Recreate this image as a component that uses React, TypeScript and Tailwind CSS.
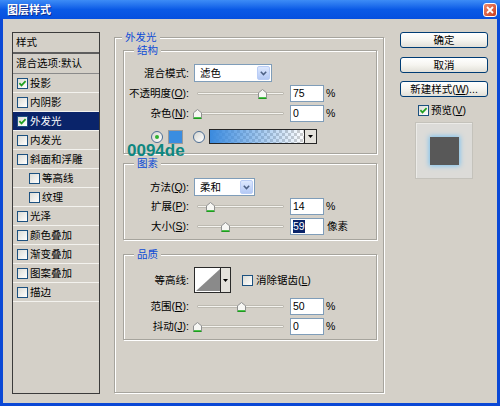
import React from "react";

const FONT = "font-['Liberation_Sans','Noto_Sans_CJK_SC',sans-serif]";

type Item = { t: string; on?: boolean; sel?: boolean; sub?: boolean };

const items: Item[] = [
  { t: "投影", on: true },
  { t: "内阴影" },
  { t: "外发光", on: true, sel: true },
  { t: "内发光" },
  { t: "斜面和浮雕" },
  { t: "等高线", sub: true },
  { t: "纹理", sub: true },
  { t: "光泽" },
  { t: "颜色叠加" },
  { t: "渐变叠加" },
  { t: "图案叠加" },
  { t: "描边" },
];

function Check({ on = false }: { on?: boolean }) {
  return (
    <span className="flex h-[11px] w-[11px] shrink-0 items-center justify-center border border-[#1c5180] bg-linear-to-br from-[#dcdcd6] to-white">
      {on && (
        <svg width="9" height="9" viewBox="0 0 9 9">
          <path d="M1.4 4.2 L3.5 6.4 L7.6 2.1" fill="none" stroke="#21a121" strokeWidth="1.7" />
        </svg>
      )}
    </span>
  );
}

function Radio({ on = false }: { on?: boolean }) {
  return (
    <span className="flex h-[12px] w-[12px] shrink-0 items-center justify-center rounded-full border border-[#4c6d93] bg-linear-to-br from-[#d6d6d0] to-white">
      {on && <span className="h-[4px] w-[4px] rounded-full bg-[#2fb12f]" />}
    </span>
  );
}

function Slider({ at }: { at: number }) {
  return (
    <div className="relative ml-[4px] h-[17px] w-[92px] shrink-0">
      <div className="absolute left-[4px] right-[1px] top-[7px] h-[3px] rounded-[1px] border border-[#bdbab1] bg-[#f4f3ef]" />
      <svg width="9" height="10" viewBox="0 0 9 10" className="absolute top-[4px]" style={{ left: at }}>
        <path d="M0.5 9.5V3.8L4.5 0.5L8.5 3.8V9.5Z" fill="#f7f7f4" stroke="#8f9090" />
        <path d="M1 8.5H8" stroke="#4cc44c" />
        <path d="M0.5 9.5H8.5" stroke="#1f9a1f" />
      </svg>
    </div>
  );
}

function NumBox({ value, picked = false }: { value: string; picked?: boolean }) {
  return (
    <div className="ml-[5px] flex h-[17px] w-[34px] shrink-0 items-center border border-[#7f9db9] bg-white pl-[2px] text-[10.5px] leading-none">
      <span className={picked ? "bg-[#0a246a] py-[1px] text-white" : ""}>{value}</span>
    </div>
  );
}

function Combo({ value, wide = false }: { value: string; wide?: boolean }) {
  return (
    <div className={`ml-[5px] flex h-[18px] shrink-0 items-center border border-[#7f9db9] bg-white ${wide ? "w-[78px]" : "w-[61px]"}`}>
      <span className="flex-1 pl-[5px] text-[10.5px] leading-none">{value}</span>
      <span className="mr-[1px] flex h-[14px] w-[13px] items-center justify-center rounded-[2px] border border-[#bacdf6] bg-linear-to-b from-[#dde8fe] to-[#b4c9f5]">
        <svg width="7" height="5" viewBox="0 0 7 5">
          <path d="M0.8 0.8L3.5 3.6L6.2 0.8" fill="none" stroke="#4d6185" strokeWidth="1.5" />
        </svg>
      </span>
    </div>
  );
}

function Row({ label, className = "", children }: { label: React.ReactNode; className?: string; children: React.ReactNode }) {
  return (
    <div className={`flex items-center ${className}`}>
      <span className="w-[65px] shrink-0 whitespace-nowrap text-right text-[10.5px] leading-none">{label}</span>
      {children}
    </div>
  );
}

function Unit({ children, className = "ml-[2px]" }: { children: React.ReactNode; className?: string }) {
  return <span className={`text-[10.5px] leading-none ${className}`}>{children}</span>;
}

function Group({ title, className = "", children }: { title: string; className?: string; children: React.ReactNode }) {
  return (
    <fieldset className={`border border-[#a6a49d] shadow-[inset_1px_1px_0_#fff,1px_1px_0_#fff] ${className}`}>
      <legend className="ml-[10px] bg-[#d4d0c8] px-[3px] text-[10.5px] leading-[14px] text-[#0c4bd6]">{title}</legend>
      {children}
    </fieldset>
  );
}

function XpButton({ children, className = "" }: { children: React.ReactNode; className?: string }) {
  return (
    <button className={`flex h-[16px] w-[88px] items-center justify-center rounded-[3px] border border-[#003c74] bg-linear-to-b from-white via-[#f6f5f0] to-[#e2e0d8] text-[10.5px] leading-none ${className}`}>
      {children}
    </button>
  );
}

export default function App() {
  return (
    <div className={`flex h-[406px] w-[500px] flex-col bg-[#0a48d6] text-black ${FONT}`}>
      {/* title bar */}
      <div className="flex h-[19px] shrink-0 items-center bg-linear-to-b from-[#3d8cf6] via-[#0a5ae6] to-[#0650df] pl-[7px]">
        <span className="mt-[2px] text-[11px] font-bold leading-none text-white [text-shadow:1px_1px_0_#0c2a8c]">图层样式</span>
        <span className="ml-auto mr-[3px] mt-[1px] flex h-[14px] w-[14px] items-center justify-center rounded-[3px] border border-white bg-linear-to-br from-[#ef8a6c] to-[#c8391c]">
          <svg width="8" height="8" viewBox="0 0 8 8">
            <path d="M1 1L7 7M7 1L1 7" stroke="#fff" strokeWidth="1.8" />
          </svg>
        </span>
      </div>

      {/* body */}
      <div className="mx-[3px] mb-[3px] flex flex-1 items-start bg-[#d4d0c8] pl-[9px] pt-[11px]">
        {/* style list */}
        <div className="mt-[2px] flex h-[362px] w-[88px] shrink-0 flex-col border border-[#3b3b3b] text-[10.5px] leading-none">
          <div className="flex h-[21px] items-center border-b-2 border-[#5e5e5e] pl-[3px]">样式</div>
          <div className="flex h-[20px] items-center border-b border-[#8a8a8a] pl-[3px]">混合选项:默认</div>
          {items.map((it) => (
            <div
              key={it.t}
              className={`flex h-[19px] items-center gap-[2px] border-b border-[#f3f2ee] ${it.sub ? "pl-[16px]" : "pl-[4px]"} ${it.sel ? "bg-[#0a246a] text-white" : ""}`}
            >
              <Check on={it.on} />
              <span>{it.t}</span>
            </div>
          ))}
        </div>

        {/* outer glow settings */}
        <div className="relative ml-[14px] h-[363px] w-[270px] shrink-0">
          <fieldset className="h-full border border-[#a6a49d] shadow-[inset_1px_1px_0_#fff,1px_1px_0_#fff]">
            <legend className="ml-[7px] bg-[#d4d0c8] px-[3px] text-[10.5px] leading-[14px] text-[#0c4bd6]">外发光</legend>
            <div className="flex flex-col pl-[8px] pr-[6px]">
              <Group title="结构" className="-mt-px pb-[9px]">
                <Row label="混合模式:" className="mt-[7px] h-[18px]">
                  <Combo value="滤色" wide />
                </Row>
                <Row label={<>不透明度(<u>O</u>):</>} className="mt-[3px] h-[17px]">
                  <Slider at={65} />
                  <NumBox value="75" />
                  <Unit>%</Unit>
                </Row>
                <Row label={<>杂色(<u>N</u>):</>} className="mt-[3px] h-[17px]">
                  <Slider at={0} />
                  <NumBox value="0" />
                  <Unit>%</Unit>
                </Row>
                <div className="mt-[7px] flex h-[15px] items-center pl-[27px]">
                  <Radio on />
                  <span className="ml-[5px] h-[14px] w-[15px] border border-[#9a9a9a] bg-[#3a8de0]" />
                  <span className="ml-[10px]">
                    <Radio />
                  </span>
                  <div className="ml-[4px] flex h-[15px] w-[108px] border border-[#262626]">
                    <div className="flex-1 bg-[repeating-conic-gradient(#cfcfcf_0_25%,#ffffff_0_50%)] bg-[length:6px_6px]">
                      <div className="h-full w-full bg-linear-to-r from-[#3a8ade] to-transparent" />
                    </div>
                    <div className="flex w-[12px] items-center justify-center border-l border-[#262626] bg-[#e4e2dc]">
                      <svg width="5" height="3" viewBox="0 0 5 3">
                        <path d="M0 0H5L2.5 3Z" fill="#000" />
                      </svg>
                    </div>
                  </div>
                </div>
              </Group>

              <Group title="图素" className="mt-[2px] pb-[4px]">
                <Row label={<>方法(<u>Q</u>):</>} className="mt-[8px] h-[18px]">
                  <Combo value="柔和" />
                </Row>
                <Row label={<>扩展(<u>P</u>):</>} className="mt-[2px] h-[17px]">
                  <Slider at={13} />
                  <NumBox value="14" />
                  <Unit>%</Unit>
                </Row>
                <Row label={<>大小(<u>S</u>):</>} className="mt-[3px] h-[17px]">
                  <Slider at={28} />
                  <NumBox value="59" picked />
                  <Unit className="ml-[3px]">像素</Unit>
                </Row>
              </Group>

              <Group title="品质" className="mt-[7px] pb-[4px]">
                <Row label="等高线:" className="mt-[6px] h-[26px]">
                  <div className="ml-[5px] flex h-[26px] w-[37px] shrink-0 border border-[#2a2a2a] bg-white">
                    <svg width="24" height="22" viewBox="0 0 24 22" className="ml-[1px] mt-[1px]">
                      <rect width="24" height="22" fill="#fff" />
                      <path d="M0 22L24 0V22Z" fill="#8a8a8a" />
                    </svg>
                    <div className="flex flex-1 items-center justify-center border-l border-[#2a2a2a] bg-[#e4e2dc]">
                      <svg width="5" height="3" viewBox="0 0 5 3">
                        <path d="M0 0H5L2.5 3Z" fill="#000" />
                      </svg>
                    </div>
                  </div>
                  <span className="ml-[11px] flex items-center gap-[3px] text-[10.5px] leading-none">
                    <Check />
                    <span>消除锯齿(<u>L</u>)</span>
                  </span>
                </Row>
                <Row label={<>范围(<u>R</u>):</>} className="mt-[5px] h-[17px]">
                  <Slider at={44} />
                  <NumBox value="50" />
                  <Unit>%</Unit>
                </Row>
                <Row label={<>抖动(<u>J</u>):</>} className="mt-[3px] h-[17px]">
                  <Slider at={0} />
                  <NumBox value="0" />
                  <Unit>%</Unit>
                </Row>
              </Group>
            </div>
          </fieldset>
          <span className="absolute left-[13px] top-[112px] text-[17px] font-bold leading-none text-[#0e8780]">0094de</span>
        </div>

        {/* buttons and preview */}
        <div className="ml-[16px] mt-[2px] flex w-[88px] shrink-0 flex-col">
          <XpButton>确定</XpButton>
          <XpButton className="mt-[9px]">取消</XpButton>
          <XpButton className="mt-[8px]">
            新建样式(<u>W</u>)...
          </XpButton>
          <div className="mt-[7px] flex h-[12px] items-center gap-[2px] pl-[18px] text-[10.5px] leading-none">
            <Check on />
            <span>预览(<u>V</u>)</span>
          </div>
          <div className="mx-auto mt-[6px] flex h-[57px] w-[58px] items-center justify-center border border-[#c4c2bb] bg-[#dcdbd8] shadow-[inset_1px_1px_0_#ecebe8]">
            <div className="h-[28px] w-[29px] bg-[#585858] shadow-[0_0_5px_1px_#7cc3f0]" />
          </div>
        </div>
      </div>
    </div>
  );
}
